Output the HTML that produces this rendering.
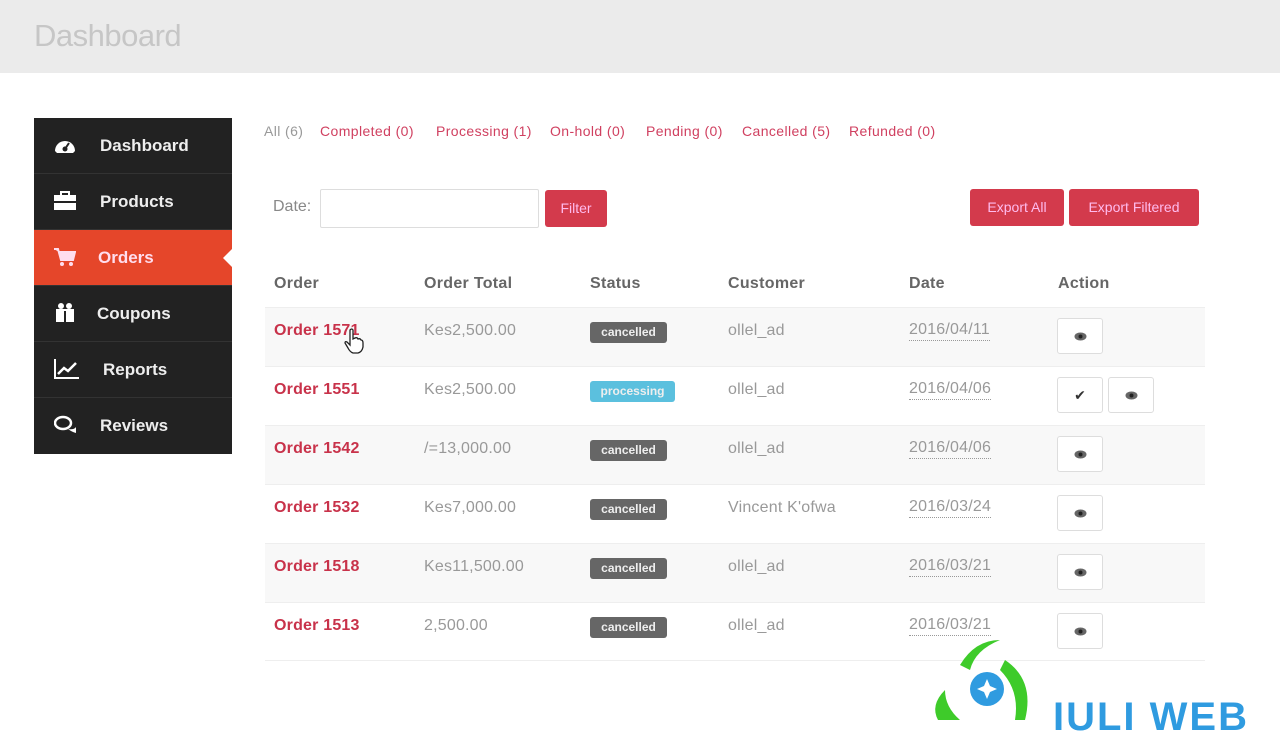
<!DOCTYPE html>
<html><head><meta charset="utf-8"><style>
*{margin:0;padding:0;box-sizing:border-box}
body{width:1280px;height:720px;overflow:hidden;background:#fff;font-family:"Liberation Sans","DejaVu Sans",sans-serif;position:relative}
.hdr{position:absolute;left:0;top:0;width:1280px;height:73px;background:#ebebeb}
.hdr span{position:absolute;left:34px;top:18px;font-size:31px;color:#c6c6c6;letter-spacing:-0.5px}
.side{position:absolute;left:34px;top:118px;width:198px;height:336px;background:#222}
.it{position:absolute;left:0;width:198px;height:56px;border-bottom:1px solid #333;color:#eee;font-size:17px;font-weight:bold}
.it .t{position:absolute;top:18px}
.it svg{position:absolute;left:20px;top:17px}
.it.on{background:#e5462a;color:#fde}
.it.on:after{content:"";position:absolute;right:0;top:19px;border:9px solid transparent;border-right-color:#fff}
.tabs{position:absolute;top:123px;left:264px;font-size:14px;letter-spacing:0.4px;color:#d04060;white-space:nowrap}
.tabs span{position:absolute}
.a{position:absolute;font-size:14px}
.btn{position:absolute;background:#d33a4c;color:#fbe;font-size:14px;border-radius:3px;text-align:center;line-height:37px;height:37px}
.th{position:absolute;top:275px;font-size:16px;font-weight:bold;color:#666;letter-spacing:0.3px}
.row{position:absolute;left:265px;width:940px;height:59px;border-top:1px solid #eee}
.row.o{background:#f8f8f8}
.c{position:absolute;top:14px;font-size:16px;color:#999;letter-spacing:0.2px}
.ord{color:#c8324a;font-weight:bold}
.bd{position:absolute;top:14px;height:21px;line-height:21px;font-size:12px;font-weight:bold;color:#eee;border-radius:3px;width:77px;text-align:center}
.dt{border-bottom:1px dotted #999;line-height:20px}
.ab{position:absolute;top:10px;width:46px;height:36px;border:1px solid #ddd;border-radius:3px;background:#fff;text-align:center;line-height:34px;font-size:14px;color:#333}
.ab svg{position:absolute;left:16px;top:13px}
</style></head><body>
<div class="hdr"><span>Dashboard</span></div>
<div class="side">
<div class="it" style="top:0"><svg width="22" height="20" viewBox="0 0 22 20"><path d="M1 16A10 10 0 0 1 21 16L19 18H3Z" fill="#fff"/><circle cx="11" cy="14" r="2.5" fill="#222"/><path d="M11 14L15 8" stroke="#222" stroke-width="2"/></svg><span class="t" style="left:66px">Dashboard</span></div>
<div class="it" style="top:56px"><svg width="22" height="20" viewBox="0 0 22 20"><rect x="7" y="1" width="8" height="4" fill="none" stroke="#fff" stroke-width="2"/><rect x="0" y="4" width="22" height="6" fill="#fff"/><rect x="0" y="12" width="22" height="7" fill="#fff"/></svg><span class="t" style="left:66px">Products</span></div>
<div class="it on" style="top:112px"><svg width="22" height="20" viewBox="0 0 22 20"><path d="M0 2H4L7 13H19L21 5H5" fill="#fde" stroke="#fde" stroke-width="2"/><circle cx="8" cy="17" r="2" fill="#fde"/><circle cx="17" cy="17" r="2" fill="#fde"/></svg><span class="t" style="left:64px">Orders</span></div>
<div class="it" style="top:168px"><svg width="22" height="20" viewBox="0 0 22 20"><rect x="2" y="6" width="18" height="13" fill="#fff"/><circle cx="7" cy="3" r="3" fill="#fff"/><circle cx="15" cy="3" r="3" fill="#fff"/><rect x="10" y="8" width="2" height="11" fill="#222"/></svg><span class="t" style="left:63px">Coupons</span></div>
<div class="it" style="top:224px"><svg width="26" height="20" viewBox="0 0 26 20"><path d="M1 0V19H25" stroke="#fff" stroke-width="2" fill="none"/><path d="M4 15L10 9L14 12L22 4" stroke="#fff" stroke-width="2.5" fill="none"/></svg><span class="t" style="left:69px">Reports</span></div>
<div class="it" style="top:280px;border:0"><svg width="24" height="20" viewBox="0 0 24 20"><ellipse cx="9" cy="8" rx="8" ry="6" fill="none" stroke="#fff" stroke-width="2.5"/><path d="M14 14Q20 15 22 12L22 18Q18 17 14 14" fill="#fff"/></svg><span class="t" style="left:66px">Reviews</span></div>
</div>
<div class="tabs"><span style="left:0;color:#999">All (6)</span><span style="left:56px">Completed (0)</span><span style="left:172px">Processing (1)</span><span style="left:286px">On-hold (0)</span><span style="left:382px">Pending (0)</span><span style="left:478px">Cancelled (5)</span><span style="left:585px">Refunded (0)</span></div>
<div class="a" style="left:273px;top:198px;font-size:16px;color:#888">Date:</div>
<div style="position:absolute;left:320px;top:189px;width:219px;height:39px;border:1px solid #ddd;border-radius:2px"></div>
<div class="btn" style="left:545px;top:190px;width:62px">Filter</div>
<div class="btn" style="left:970px;top:189px;width:94px">Export All</div>
<div class="btn" style="left:1069px;top:189px;width:130px">Export Filtered</div>
<div class="th" style="left:274px">Order</div><div class="th" style="left:424px">Order Total</div><div class="th" style="left:590px">Status</div><div class="th" style="left:728px">Customer</div><div class="th" style="left:909px">Date</div><div class="th" style="left:1058px">Action</div>

<div class="row o" style="top:307px"><span class="c ord" style="left:9px">Order 1571</span><span class="c" style="left:159px">Kes2,500.00</span><span class="bd" style="left:325px;background:#666">cancelled</span><span class="c" style="left:463px">ollel_ad</span><span class="c dt" style="left:644px;top:12px">2016/04/11</span><span class="ab" style="left:792px"><svg width="13" height="9" viewBox="0 0 13 9"><ellipse cx="6.5" cy="4.5" rx="6" ry="4" fill="#666"/><circle cx="6.5" cy="4.5" r="2" fill="#222"/></svg></span></div>
<div class="row" style="top:366px"><span class="c ord" style="left:9px">Order 1551</span><span class="c" style="left:159px">Kes2,500.00</span><span class="bd" style="left:325px;background:#5bc0de;width:85px">processing</span><span class="c" style="left:463px">ollel_ad</span><span class="c dt" style="left:644px;top:12px">2016/04/06</span><span class="ab" style="left:792px">✔</span><span class="ab" style="left:843px"><svg width="13" height="9" viewBox="0 0 13 9"><ellipse cx="6.5" cy="4.5" rx="6" ry="4" fill="#666"/><circle cx="6.5" cy="4.5" r="2" fill="#222"/></svg></span></div>
<div class="row o" style="top:425px"><span class="c ord" style="left:9px">Order 1542</span><span class="c" style="left:159px">/=13,000.00</span><span class="bd" style="left:325px;background:#666">cancelled</span><span class="c" style="left:463px">ollel_ad</span><span class="c dt" style="left:644px;top:12px">2016/04/06</span><span class="ab" style="left:792px"><svg width="13" height="9" viewBox="0 0 13 9"><ellipse cx="6.5" cy="4.5" rx="6" ry="4" fill="#666"/><circle cx="6.5" cy="4.5" r="2" fill="#222"/></svg></span></div>
<div class="row" style="top:484px"><span class="c ord" style="left:9px">Order 1532</span><span class="c" style="left:159px">Kes7,000.00</span><span class="bd" style="left:325px;background:#666">cancelled</span><span class="c" style="left:463px">Vincent K'ofwa</span><span class="c dt" style="left:644px;top:12px">2016/03/24</span><span class="ab" style="left:792px"><svg width="13" height="9" viewBox="0 0 13 9"><ellipse cx="6.5" cy="4.5" rx="6" ry="4" fill="#666"/><circle cx="6.5" cy="4.5" r="2" fill="#222"/></svg></span></div>
<div class="row o" style="top:543px"><span class="c ord" style="left:9px">Order 1518</span><span class="c" style="left:159px">Kes11,500.00</span><span class="bd" style="left:325px;background:#666">cancelled</span><span class="c" style="left:463px">ollel_ad</span><span class="c dt" style="left:644px;top:12px">2016/03/21</span><span class="ab" style="left:792px"><svg width="13" height="9" viewBox="0 0 13 9"><ellipse cx="6.5" cy="4.5" rx="6" ry="4" fill="#666"/><circle cx="6.5" cy="4.5" r="2" fill="#222"/></svg></span></div>
<div class="row" style="top:602px;border-bottom:1px solid #eee"><span class="c ord" style="left:9px">Order 1513</span><span class="c" style="left:159px">2,500.00</span><span class="bd" style="left:325px;background:#666">cancelled</span><span class="c" style="left:463px">ollel_ad</span><span class="c dt" style="left:644px;top:12px">2016/03/21</span><span class="ab" style="left:792px"><svg width="13" height="9" viewBox="0 0 13 9"><ellipse cx="6.5" cy="4.5" rx="6" ry="4" fill="#666"/><circle cx="6.5" cy="4.5" r="2" fill="#222"/></svg></span></div>

<svg style="position:absolute;left:344px;top:328px" width="20" height="26" viewBox="0 0 20 26"><path d="M6 2Q8 0 9 2V11L11 10Q13 9 14 11Q16 10 17 12Q19 12 19 15V19Q18 24 14 25H9Q6 24 4 20L1 15Q1 13 3 14L6 17Z" fill="#fff" stroke="#222" stroke-width="1.3"/></svg>

<svg style="position:absolute;left:930px;top:635px" width="110" height="85" viewBox="0 0 110 85"><path d="M30 30Q45 5 70 5Q45 15 40 35Z" fill="#3ecb2a"/><path d="M75 25Q105 45 95 85L85 85Q90 55 70 35Z" fill="#3ecb2a"/><path d="M8 85Q0 70 15 55Q15 72 30 85Z" fill="#3ecb2a"/><circle cx="57" cy="54" r="17" fill="#2f9be0"/><path d="M57 44L60 51L67 54L60 57L57 64L54 57L47 54L54 51Z" fill="#fff"/></svg>
<div style="position:absolute;left:1053px;top:697px;font-size:40px;font-weight:bold;color:#2f9be0;letter-spacing:2px;line-height:40px">IULI WEB</div>
</body></html>
